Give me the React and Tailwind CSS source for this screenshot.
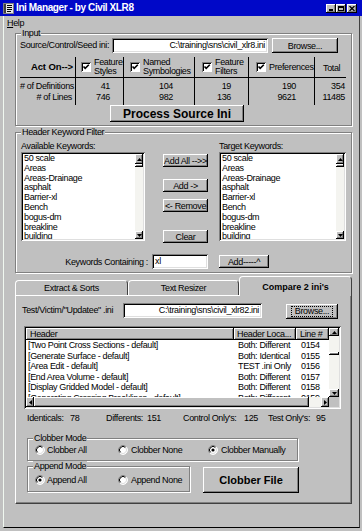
import React from "react";

const RAISED =
  "bg-[#c0c0c0] shadow-[inset_-1px_-1px_0_#000,inset_1px_1px_0_#fff,inset_-2px_-2px_0_#808080]";
const SUNKEN =
  "bg-white shadow-[inset_1px_1px_0_#808080,inset_-1px_-1px_0_#fff,inset_2px_2px_0_#000,inset_-2px_-2px_0_#dfdfdf]";

function Arrow({ dir }) {
  if (dir === "up")
    return (
      <svg width="5" height="3" viewBox="0 0 5 3">
        <polygon points="0,3 2.5,0 5,3" fill="#000" />
      </svg>
    );
  if (dir === "down")
    return (
      <svg width="5" height="3" viewBox="0 0 5 3">
        <polygon points="0,0 5,0 2.5,3" fill="#000" />
      </svg>
    );
  if (dir === "left")
    return (
      <svg width="3" height="5" viewBox="0 0 3 5">
        <polygon points="3,0 3,5 0,2.5" fill="#000" />
      </svg>
    );
  return (
    <svg width="3" height="5" viewBox="0 0 3 5">
      <polygon points="0,0 0,5 3,2.5" fill="#000" />
    </svg>
  );
}

function Group({ label, className, children }) {
  return (
    <div
      className={`relative border border-[#808080] shadow-[1px_1px_0_#fff,inset_1px_1px_0_#fff] ${className}`}
    >
      <span className="absolute left-[5px] -top-[6px] px-[1px] bg-[#c0c0c0] leading-[10px] whitespace-nowrap">
        {label}
      </span>
      {children}
    </div>
  );
}

function Check() {
  return (
    <div className="w-[10px] h-[10px] shrink-0 bg-white shadow-[inset_1px_1px_0_#808080,inset_-1px_-1px_0_#fff,inset_2px_2px_0_#000] relative">
      <svg width="10" height="10" viewBox="0 0 10 10" className="absolute left-0 top-0">
        <path d="M2.5 4.5 L4.2 6.4 L7.8 2.8" stroke="#000" strokeWidth="1.6" fill="none" />
      </svg>
    </div>
  );
}

function Radio({ checked }) {
  const r1 = 4.5;
  const r2 = 3.5;
  const c = 5;
  const k = 0.7071;
  const arc = (r, sweep) =>
    `M ${c + k * r} ${c - k * r} A ${r} ${r} 0 0 ${sweep} ${c - k * r} ${c + k * r}`;
  return (
    <svg width="10" height="10" viewBox="0 0 10 10" className="shrink-0">
      <circle cx="5" cy="5" r="4" fill="#fff" />
      <path d={arc(r1, 0)} stroke="#808080" strokeWidth="1" fill="none" />
      <path d={arc(r1, 1)} stroke="#fff" strokeWidth="1" fill="none" />
      <path d={arc(r2, 0)} stroke="#000" strokeWidth="1" fill="none" />
      <path d={arc(r2, 1)} stroke="#dfdfdf" strokeWidth="1" fill="none" />
      {checked && <circle cx="5" cy="5" r="1.6" fill="#000" />}
    </svg>
  );
}

const KEYWORDS = [
  "50 scale",
  "Areas",
  "Areas-Drainage",
  "asphalt",
  "Barrier-xl",
  "Bench",
  "bogus-dm",
  "breakline",
  "building",
];

function ListBox({ className }) {
  return (
    <div className={`${SUNKEN} p-[2px] flex ${className}`}>
      <div className="flex-1 overflow-hidden pl-[1px]">
        <div className="-mt-[1px]">
          {KEYWORDS.map((k) => (
            <div key={k} className="h-[9.8px] leading-[10px] whitespace-nowrap">
              {k}
            </div>
          ))}
        </div>
      </div>
      <div className="w-[8px] flex flex-col bg-[#f4f4f0]">
        <div className={`${RAISED} h-[10px] flex items-center justify-center`}>
          <Arrow dir="up" />
        </div>
        <div className={`${RAISED} h-[3px]`} />
        <div className="flex-1" />
        <div className={`${RAISED} h-[8px] flex items-center justify-center`}>
          <Arrow dir="down" />
        </div>
      </div>
    </div>
  );
}

const COLS = [
  { w: "w-[56px]", pr: "pr-[3px]", kind: "label", vals: ["# of Definitions", "# of Lines"] },
  { w: "w-[48px]", pr: "pr-[13px]", kind: "check", label: ["Feature", "Styles"], pl: "pl-[5px]", vals: ["41", "746"] },
  { w: "w-[71px]", pr: "pr-[21px]", kind: "check", label: ["Named", "Symbologies"], pl: "pl-[6px]", vals: ["104", "982"] },
  { w: "w-[54px]", pr: "pr-[17px]", kind: "check", label: ["Feature", "Filters"], pl: "pl-[7px]", vals: ["19", "136"] },
  { w: "w-[66px]", pr: "pr-[18px]", kind: "check", label: ["Preferences"], pl: "pl-[7px]", vals: ["190", "9621"] },
  { w: "w-[31px]", pr: "pr-[1px]", kind: "total", vals: ["354", "11485"] },
];

function Table() {
  return (
    <div className="flex h-[48px] w-[326px]">
      {COLS.map((c, i) => (
        <div
          key={i}
          className={`${c.w} flex flex-col ${i < COLS.length - 1 ? "border-r border-r-[#000]" : ""}`}
        >
          <div className="h-[21px] border-b border-b-[#000] flex items-center shrink-0">
            {c.kind === "label" && (
              <div className="w-full text-right pr-[2px] font-bold text-[9.5px] tracking-[-0.1px] leading-[12px] whitespace-nowrap">
                Act On--&gt;
              </div>
            )}
            {c.kind === "check" && (
              <div className={`flex items-center ${c.pl} gap-[3px]`}>
                <Check />
                <div className="leading-[9px] whitespace-nowrap">
                  {c.label.map((l) => (
                    <div key={l}>{l}</div>
                  ))}
                </div>
              </div>
            )}
            {c.kind === "total" && <div className="pl-[8px] leading-[10px] mt-[2px]">Total</div>}
          </div>
          <div className="pt-[3px]">
            {c.vals.map((v) => (
              <div key={v} className={`h-[11px] leading-[11px] text-right whitespace-nowrap ${c.pr}`}>
                {v}
              </div>
            ))}
          </div>
        </div>
      ))}
    </div>
  );
}

const ROWS = [
  ["[Two Point Cross Sections - default]", "Both: Different", "0154"],
  ["[Generate Surface - default]", "Both: Identical", "0155"],
  ["[Area Edit - default]", "TEST .ini Only", "0156"],
  ["[End Area Volume - default]", "Both: Different", "0157"],
  ["[Display Gridded Model - default]", "Both: Different", "0158"],
  ["[Generating Crossing Breaklines - default]", "Both: Different", "0159"],
];

function ListView() {
  return (
    <div className={`${SUNKEN} ml-[2px] mt-[7px] w-[317px] h-[83px] p-[2px] flex flex-col`}>
      <div className="flex h-[69px]">
        <div className="w-[303px] overflow-hidden flex flex-col">
          <div className="flex h-[12px] shrink-0">
            <div className={`${RAISED} w-[208px] pl-[4px] leading-[12px]`}>Header</div>
            <div className={`${RAISED} w-[62px] pl-[3px] leading-[12px] whitespace-nowrap overflow-hidden`}>
              Header Loca...
            </div>
            <div className={`${RAISED} w-[33px] pl-[4px] leading-[12px] whitespace-nowrap`}>Line #</div>
          </div>
          {ROWS.map((r) => (
            <div key={r[0]} className="flex h-[10.6px] leading-[10.6px] shrink-0 whitespace-nowrap">
              <div className="w-[208px] pl-[2px] shrink-0">{r[0]}</div>
              <div className="w-[62px] pl-[4px] shrink-0">{r[1]}</div>
              <div className="w-[33px] pl-[5px] shrink-0">{r[2]}</div>
            </div>
          ))}
        </div>
        <div className="w-[10px] flex flex-col bg-[#f4f4f0]">
          <div className={`${RAISED} h-[8px] flex items-center justify-center`}>
            <Arrow dir="up" />
          </div>
          <div className="h-[16px]" />
          <div className={`${RAISED} h-[3px]`} />
          <div className="flex-1" />
          <div className={`${RAISED} h-[8px] flex items-center justify-center`}>
            <Arrow dir="down" />
          </div>
        </div>
      </div>
      <div className="flex h-[10px]">
        <div className={`${RAISED} w-[8px] flex items-center justify-center`}>
          <Arrow dir="left" />
        </div>
        <div className={`${RAISED} w-[275px]`} />
        <div className="w-[12px] bg-[#f4f4f0]" />
        <div className={`${RAISED} w-[8px] flex items-center justify-center`}>
          <Arrow dir="right" />
        </div>
        <div className="w-[10px] bg-[#c0c0c0]" />
      </div>
    </div>
  );
}

function TitleIcon() {
  return (
    <svg width="11" height="11" viewBox="0 0 11 11" className="shrink-0">
      <rect x="0.5" y="0.5" width="10" height="10" fill="#e8e8e8" stroke="#808080" />
      <rect x="1" y="1" width="2" height="9" fill="#404040" />
      <rect x="4" y="2" width="5" height="1" fill="#000" />
      <rect x="4" y="4" width="5" height="1" fill="#000" />
      <rect x="4" y="6" width="5" height="1" fill="#000" />
      <rect x="4" y="8" width="4" height="1" fill="#000" />
    </svg>
  );
}

function TitleBtn({ children }) {
  return (
    <div className={`${RAISED} w-[10px] h-[9px] flex items-center justify-center`}>{children}</div>
  );
}

export default function App() {
  return (
    <div className="w-[362px] h-[531px] bg-[#c0c0c0] overflow-hidden text-[9px] tracking-[-0.35px] leading-[10px] text-black [font-family:'Liberation_Sans',Arial,sans-serif]">
      {/* Title bar */}
      <div className="h-[16px] bg-[#0008c8] flex items-center pl-[3px] pr-[5px]">
        <TitleIcon />
        <div className="ml-[2px] text-white font-bold text-[10px] tracking-[-0.4px] leading-[12px] whitespace-nowrap">
          Ini Manager - by Civil XLR8
        </div>
        <div className="flex-1" />
        <div className="flex items-center">
          <TitleBtn>
            <div className="w-[4px] h-[2px] bg-black mt-[3px]" />
          </TitleBtn>
          <TitleBtn>
            <div className="w-[6px] h-[5px] border border-black border-t-2" />
          </TitleBtn>
          <div className="w-[1px]" />
          <TitleBtn>
            <svg width="6" height="5" viewBox="0 0 6 5">
              <path d="M0.5 0 L5.5 5 M5.5 0 L0.5 5" stroke="#000" strokeWidth="1.3" />
            </svg>
          </TitleBtn>
        </div>
      </div>

      {/* Window body */}
      <div className="ml-[3px] mr-[2px] h-[512px] border-l border-l-[#f0f8f0] border-r border-r-[#404040] border-b border-b-[#000]">
        {/* Menu */}
        <div className="h-[13px] pl-[3px] pt-[1px] leading-[12px]">
          <span className="underline">H</span>elp
        </div>

        <div className="pl-[11px]">
          {/* Input group */}
          <Group label="Input" className="mt-[4px] w-[337px] h-[93px] pt-[4px] pl-[4px]">
            <div className="flex items-center h-[15px]">
              <div className="w-[92px] whitespace-nowrap leading-[15px]">Source/Control/Seed ini:</div>
              <div className={`${SUNKEN} w-[156px] h-[15px] pr-[3px] text-right leading-[15px] whitespace-nowrap overflow-hidden`}>
                C:\training\sns\civil_xlr8.ini
              </div>
              <div className={`${RAISED} ml-[4px] w-[66px] h-[15px] flex items-center justify-center`}>
                Browse...
              </div>
            </div>
            <div className="mt-[4px]">
              <Table />
            </div>
            <div
              className={`${RAISED} ml-[90px] w-[134px] h-[17px] flex items-center justify-center font-bold text-[12px] tracking-[0px] leading-[14px] whitespace-nowrap`}
            >
              Process Source Ini
            </div>
          </Group>

          {/* Header keyword filter */}
          <Group label="Header Keyword Filter" className="mt-[6px] w-[337px] h-[141px] pl-[5px]">
            <div className="flex">
              <div className="w-[124px] pt-[8px]">
                <div className="leading-[10px] whitespace-nowrap">Available Keywords:</div>
                <ListBox className="mt-[1px] h-[89px]" />
              </div>
              <div className="ml-[18px] w-[45px] flex flex-col">
                <div className={`${RAISED} mt-[21px] h-[13px] flex items-center justify-center whitespace-nowrap`}>
                  Add All --&gt;&gt;
                </div>
                <div className={`${RAISED} mt-[12px] h-[13px] flex items-center justify-center whitespace-nowrap`}>
                  Add -&gt;
                </div>
                <div className={`${RAISED} mt-[7px] h-[13px] flex items-center justify-center whitespace-nowrap`}>
                  &lt;- Remove
                </div>
                <div className={`${RAISED} mt-[18px] h-[13px] flex items-center justify-center`}>Clear</div>
              </div>
              <div className="ml-[11px] w-[127px] pt-[8px]">
                <div className="leading-[10px] whitespace-nowrap">Target Keywords:</div>
                <ListBox className="mt-[1px] h-[89px]" />
              </div>
            </div>
            <div className="flex items-center mt-[11px] h-[15px]">
              <div className="w-[129px] text-right pr-[2px] whitespace-nowrap">Keywords Containing :</div>
              <div className={`${SUNKEN} ml-[2px] w-[56px] h-[15px] pl-[3px] leading-[15px]`}>xl</div>
              <div className={`${RAISED} ml-[11px] w-[50px] h-[13px] flex items-center justify-center whitespace-nowrap`}>
                Add-----^
              </div>
            </div>
          </Group>

          {/* Tabs */}
          <div className="mt-[2px] flex items-end h-[20px] w-[337px]">
            <div className="w-[113px] h-[15px] border-t border-l border-white border-r border-r-[#404040] rounded-t-[4px] flex items-center justify-center whitespace-nowrap">
              Extract &amp; Sorts
            </div>
            <div className="w-[111px] h-[15px] border-t border-l border-white border-r border-r-[#404040] rounded-t-[4px] flex items-center justify-center whitespace-nowrap">
              Text Resizer
            </div>
            <div className="relative z-10 -mb-[1px] w-[113px] h-[20px] bg-[#c0c0c0] border-t border-l border-white border-r border-r-[#404040] rounded-t-[4px] flex items-center justify-center font-bold text-[9px] tracking-[0px] whitespace-nowrap">
              Compare 2 ini's
            </div>
          </div>
          <div className="w-[337px] h-[209px] border border-t-white border-l-white border-r-[#404040] border-b-[#404040] shadow-[inset_-1px_-1px_0_#808080] pl-[6px] pt-[7px]">
            <div className="flex items-start">
              <div className="w-[101px] leading-[15px] whitespace-nowrap">Test/Victim/"Updatee" .ini</div>
              <div className={`${SUNKEN} w-[139px] h-[15px] pr-[3px] text-right leading-[15px] whitespace-nowrap overflow-hidden`}>
                C:\training\sns\civil_xlr82.ini
              </div>
              <div className={`${RAISED} ml-[24px] mt-[1px] w-[52px] h-[15px] flex items-center justify-center`}>
                <span className="outline outline-1 outline-dotted outline-black px-[3px] leading-[9px]">Browse...</span>
              </div>
            </div>

            <ListView />

            <div className="flex mt-[4px] ml-[5px] leading-[10px] whitespace-nowrap">
              <div className="w-[43px]">Identicals:</div>
              <div className="w-[36px]">78</div>
              <div className="w-[41px]">Differents:</div>
              <div className="w-[36px]">151</div>
              <div className="w-[61px]">Control Only's:</div>
              <div className="w-[24px]">125</div>
              <div className="w-[48px]">Test Only's:</div>
              <div>95</div>
            </div>

            <Group label="Clobber Mode" className="mt-[15px] ml-[5px] w-[271px] h-[23px] flex items-center pl-[7px]">
              <div className="w-[83px] flex items-center gap-[2px]">
                <Radio />
                <span className="whitespace-nowrap">Clobber All</span>
              </div>
              <div className="w-[90px] flex items-center gap-[3px]">
                <Radio />
                <span className="whitespace-nowrap">Clobber None</span>
              </div>
              <div className="flex items-center gap-[3px]">
                <Radio checked />
                <span className="whitespace-nowrap">Clobber Manually</span>
              </div>
            </Group>

            <div className="flex items-start mt-[5px] ml-[5px]">
              <Group label="Append Mode" className="w-[163px] h-[26px] flex items-center pl-[7px] pt-[1px]">
                <div className="w-[83px] flex items-center gap-[2px]">
                  <Radio checked />
                  <span className="whitespace-nowrap">Append All</span>
                </div>
                <div className="flex items-center gap-[3px]">
                  <Radio />
                  <span className="whitespace-nowrap">Append None</span>
                </div>
              </Group>
              <div
                className={`${RAISED} ml-[13px] mt-[1px] w-[96px] h-[26px] flex items-center justify-center font-bold text-[11px] tracking-[0px] whitespace-nowrap`}
              >
                Clobber File
              </div>
            </div>
          </div>
        </div>
      </div>
    </div>
  );
}
